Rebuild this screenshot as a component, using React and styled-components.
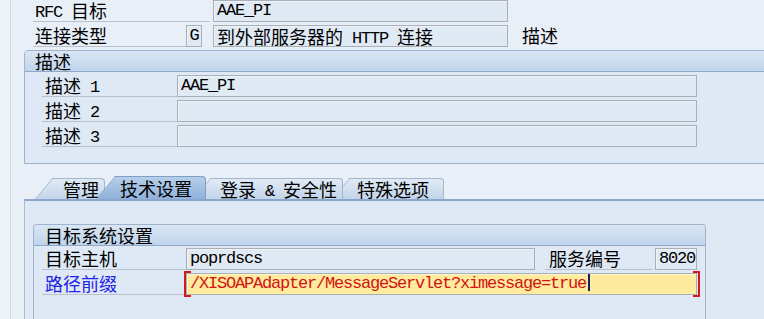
import React from "react";
import styled, { createGlobalStyle } from "styled-components";

const GlobalStyle = createGlobalStyle`
  html, body {
    margin: 0;
    padding: 0;
  }
  body {
    background: #e8eff7;
    font-family: "Noto Sans CJK SC", sans-serif;
    overflow: hidden;
  }
`;

const Screen = styled.div`
  width: 764px;
  height: 319px;
  display: flex;
  overflow: hidden;
  background: #e8eff7;
  color: #000;
  font-family: "Noto Sans CJK SC", sans-serif;
  font-size: 18px;
  line-height: 22px;
`;

const Gutter = styled.div`
  width: 10px;
  flex: none;
  background: #eef3f9;
  border-right: 1px solid #cdd8e5;
`;

const Main = styled.div`
  flex: 1;
  min-width: 0;
  padding-left: 13px;
  display: flex;
  flex-direction: column;
`;

const Header = styled.div`
  padding-left: 9px;
  display: flex;
  flex-direction: column;
  gap: 3px;
`;

const Row = styled.div`
  display: flex;
  align-items: stretch;
  height: 22px;
  flex: none;
`;

const Rows = styled.div`
  display: flex;
  flex-direction: column;
  gap: 3px;
`;

// latin text in SAP's half-width font: 9px per character
const M = styled.span`
  font-family: "Liberation Mono", monospace;
  font-size: 17px;
  letter-spacing: -1.2px;
  vertical-align: 1px;
  white-space: pre;
`;

const Han = styled.span`
  font-family: "Noto Sans CJK SC", sans-serif;
  font-size: 18px;
  letter-spacing: 0;
  vertical-align: -1px;
`;

const Label = styled.div`
  width: ${p => p.w}px;
  height: 22px;
  flex: none;
  box-sizing: border-box;
  padding-left: ${p => (p.pl == null ? 2 : p.pl)}px;
  margin-left: ${p => p.ml || 0}px;
  border-bottom: ${p => (p.plain ? "none" : "1px solid #b9c1cb")};
  line-height: 21px;
  white-space: pre;
  color: ${p => (p.accent ? "#2323e6" : "#000")};
`;

const Field = styled.div`
  width: ${p => p.w}px;
  height: 22px;
  flex: none;
  box-sizing: border-box;
  margin-left: ${p => p.ml || 0}px;
  padding-left: ${p => (p.pl == null ? 3 : p.pl)}px;
  border: 1px solid #a9afb7;
  background: ${p => (p.required ? "#ffeb9e" : "#e0eaf5")};
  box-shadow: inset 1px 1px 0 ${p => (p.required ? "#fff6cc" : "#eef3f9")};
  color: ${p => (p.required ? "#d21414" : "#000")};
  text-align: ${p => (p.center ? "center" : "left")};
  font-family: "Liberation Mono", monospace;
  font-size: 17px;
  letter-spacing: -1.2px;
  line-height: 20px;
  white-space: pre;
  overflow: hidden;
`;

const Bracketed = styled.div`
  position: relative;
  display: flex;
  padding: 0 3px 0 2px;

  &::before,
  &::after {
    content: "";
    position: absolute;
    top: -2px;
    bottom: -2px;
    width: 5px;
    border-top: 2px solid #d41a1a;
    border-bottom: 2px solid #d41a1a;
  }
  &::before {
    left: 0;
    border-left: 2px solid #d41a1a;
  }
  &::after {
    right: 0;
    border-right: 2px solid #d41a1a;
  }
`;

const Cursor = styled.span`
  display: inline-block;
  vertical-align: middle;
  width: 2px;
  height: 18px;
  margin-left: 2px;
  margin-top: -3px;
  background: #13225c;
`;

const Group = styled.section`
  flex: none;
  box-sizing: border-box;
  width: ${p => (p.w ? `${p.w}px` : "auto")};
  margin-right: ${p => (p.w ? 0 : -12)}px;
  margin-top: ${p => p.mt || 0}px;
  border: 1px solid #9fb4cc;
  border-bottom: ${p => (p.open ? "none" : "1px solid #9fb4cc")};
  border-radius: 4px 4px 0 0;
  background: #dfe9f5;
`;

const GroupTitle = styled.div`
  height: 21px;
  box-sizing: border-box;
  padding-left: ${p => p.pl}px;
  border-bottom: 1px solid #8fa9c9;
  border-radius: 3px 3px 0 0;
  background: linear-gradient(#dae6f4, #c0d4eb);
  line-height: 20px;
`;

const GroupBody = styled.div`
  padding: ${p => p.pt}px 0 ${p => p.pb}px ${p => p.pl}px;
`;

const TabStrip = styled.div`
  margin-top: 12px;
  height: 23px;
  flex: none;
  padding-left: 31px;
  display: flex;
  align-items: flex-end;
`;

const Tab = styled.div`
  position: relative;
  z-index: ${p => p.z};
  width: ${p => p.w}px;
  height: ${p => (p.active ? 23 : 21)}px;
  margin-left: ${p => p.ml || 0}px;
  padding-left: ${p => p.pl}px;
  box-sizing: border-box;
  border-top: 1px solid ${p => (p.active ? "#7f9fc6" : "#a3b6cc")};
  border-right: 1px solid ${p => (p.active ? "#7f9fc6" : "#a3b6cc")};
  border-top-right-radius: 4px;
  background: ${p =>
    p.active
      ? "linear-gradient(#b6cfea, #8fb1da)"
      : "linear-gradient(#e0eaf5, #c3d5ea)"};
  line-height: ${p => (p.active ? 22 : 20)}px;
  white-space: pre;

  &::before {
    content: "";
    position: absolute;
    z-index: -1;
    top: -1px;
    bottom: 0;
    left: -20px;
    width: 24px;
    transform-origin: bottom left;
    transform: skewX(-40deg);
    border-left: 1px solid ${p => (p.active ? "#7f9fc6" : "#a3b6cc")};
    border-top: 1px solid ${p => (p.active ? "#7f9fc6" : "#a3b6cc")};
    background: ${p =>
      p.active
        ? "linear-gradient(#b6cfea, #8fb1da)"
        : "linear-gradient(#e0eaf5, #c3d5ea)"};
  }
`;

const Panel = styled.div`
  flex: 1;
  margin-right: -12px;
  padding: 23px 0 0 8px;
  border-top: 2px solid #8ba8cc;
  border-left: 1px solid #a8bcd4;
  background: #dfe9f5;
`;

export default function App() {
  return (
    <Screen>
      <GlobalStyle />
      <Gutter />
      <Main>
        <Header>
          <Row>
            <Label w={177}>
              <M>RFC </M>目标
            </Label>
            <Field w={295} ml={3}>AAE_PI</Field>
          </Row>
          <Row>
            <Label w={153}>连接类型</Label>
            <Field w={16} pl={0} center>G</Field>
            <Field w={295} ml={11}>
              <Han>到外部服务器的</Han> HTTP <Han>连接</Han>
            </Field>
            <Label w={60} ml={14} pl={0} plain>描述</Label>
          </Row>
        </Header>

        <Group mt={3}>
          <GroupTitle pl={10}>描述</GroupTitle>
          <GroupBody pt={3} pb={16} pl={17}>
            <Rows>
              <Row>
                <Label w={135} pl={3}>
                  描述<M> 1</M>
                </Label>
                <Field w={520}>AAE_PI</Field>
              </Row>
              <Row>
                <Label w={135} pl={3}>
                  描述<M> 2</M>
                </Label>
                <Field w={520} />
              </Row>
              <Row>
                <Label w={135} pl={3}>
                  描述<M> 3</M>
                </Label>
                <Field w={520} />
              </Row>
            </Rows>
          </GroupBody>
        </Group>

        <TabStrip>
          <Tab w={50} pl={8} z={3}>管理</Tab>
          <Tab w={90} ml={11} pl={4} z={10} active>技术设置</Tab>
          <Tab w={130} ml={7} pl={7} z={2}>
            登录<M> & </M>安全性
          </Tab>
          <Tab w={92} ml={9} pl={5} z={1}>特殊选项</Tab>
        </TabStrip>

        <Panel>
          <Group w={673} open>
            <GroupTitle pl={11}>目标系统设置</GroupTitle>
            <GroupBody pt={2} pb={30} pl={8}>
              <Rows>
                <Row>
                  <Label w={144} pl={3}>目标主机</Label>
                  <Field w={349}>poprdscs</Field>
                  <Label w={108} ml={10} pl={4}>服务编号</Label>
                  <Field w={42} ml={2}>8020</Field>
                </Row>
                <Row>
                  <Label w={142} pl={3} accent>路径前缀</Label>
                  <Bracketed>
                    <Field w={511} required>
                      /XISOAPAdapter/MessageServlet?ximessage=true
                      <Cursor />
                    </Field>
                  </Bracketed>
                </Row>
              </Rows>
            </GroupBody>
          </Group>
        </Panel>
      </Main>
    </Screen>
  );
}
